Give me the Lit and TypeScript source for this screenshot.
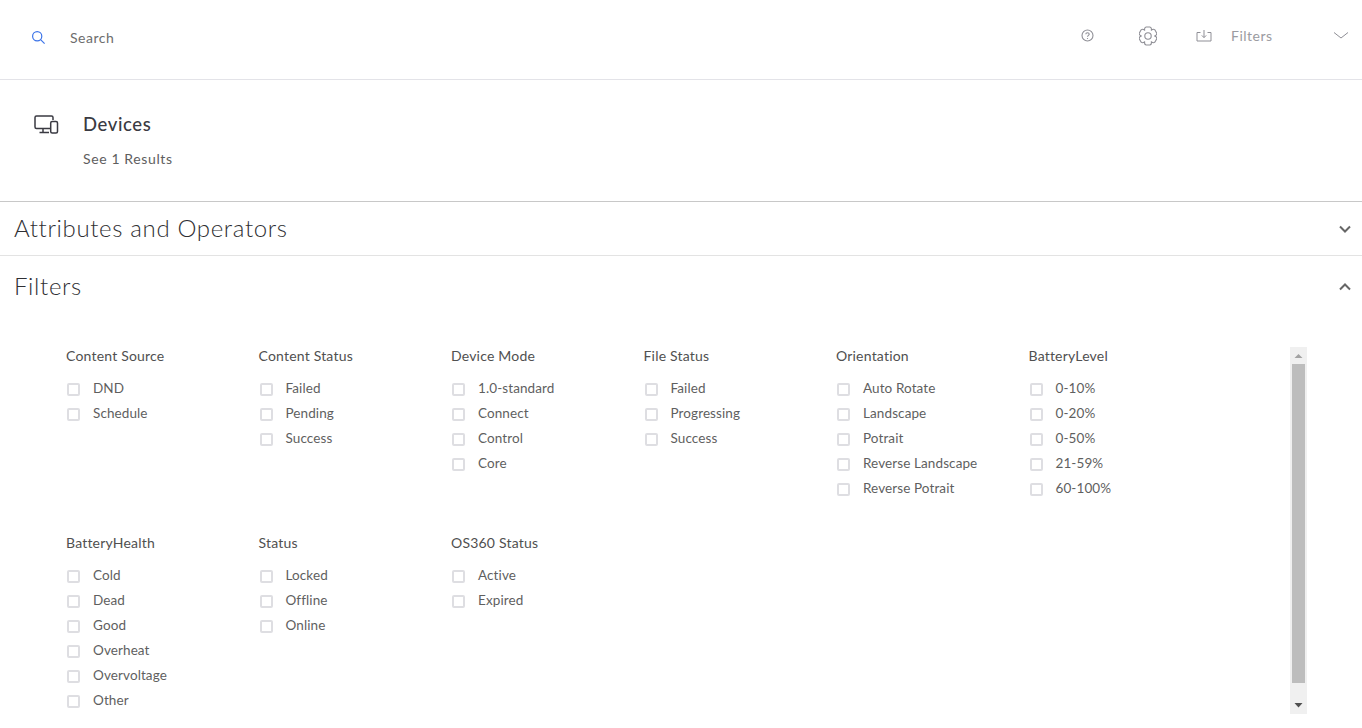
import { LitElement, html, css, svg } from "lit";
import { customElement } from "lit/decorators.js";

const groups: [string, string[]][] = [
  ["Content Source", ["DND", "Schedule"]],
  ["Content Status", ["Failed", "Pending", "Success"]],
  ["Device Mode", ["1.0-standard", "Connect", "Control", "Core"]],
  ["File Status", ["Failed", "Progressing", "Success"]],
  ["Orientation", ["Auto Rotate", "Landscape", "Potrait", "Reverse Landscape", "Reverse Potrait"]],
  ["BatteryLevel", ["0-10%", "0-20%", "0-50%", "21-59%", "60-100%"]],
  ["BatteryHealth", ["Cold", "Dead", "Good", "Overheat", "Overvoltage", "Other"]],
  ["Status", ["Locked", "Offline", "Online"]],
  ["OS360 Status", ["Active", "Expired"]],
];

const pt = (r: number, deg: number) => {
  const a = (deg * Math.PI) / 180;
  return `${(9 + r * Math.cos(a)).toFixed(2)} ${(9.5 + r * Math.sin(a)).toFixed(2)}`;
};
const gearPath = (() => {
  let d = `M${pt(6.6, -120)}`;
  for (let i = 0; i < 6; i++) {
    const c = -90 + 60 * i;
    d += ` C${pt(8.6, c - 26)} ${pt(9.2, c - 22)} ${pt(9.2, c - 12)} L${pt(9.2, c + 12)} C${pt(9.2, c + 22)} ${pt(8.6, c + 26)} ${pt(6.6, c + 30)}`;
  }
  return d + " Z";
})();

const chevron = (up: boolean) => html`<svg class="chev" width="14" height="10" viewBox="0 0 14 10" fill="none" stroke="#666" stroke-width="2">
  ${up ? svg`<path d="M2 7.5 L7 2.5 L12 7.5"/>` : svg`<path d="M2 2.5 L7 7.5 L12 2.5"/>`}
</svg>`;

@customElement("app-root")
export class AppRoot extends LitElement {
  static styles = css`
    :host { display: block; height: 728px; overflow: hidden; background: #fff; font-family: Lato, sans-serif; color: #4a4a4a; }
    .top { height: 79px; border-bottom: 1px solid #e3e3e8; display: flex; align-items: center; box-sizing: content-box; }
    .search-ico { margin-left: 31px; margin-top: -4px; flex: none; }
    .search-text { margin-left: 24px; font-size: 14px; color: #6d6d6d; letter-spacing: .5px; margin-top: -5px; flex: 1; }
    .tools { display: flex; align-items: center; margin-top: -8px; color: #9a9aa0; }
    .tools .help { margin-right: 45px; }
    .tools .gear { margin-right: 39px; }
    .tools .dl { margin-right: 19px; }
    .tools .flt { font-size: 14px; letter-spacing: .5px; color: #9b9ba1; margin-right: 60px; width: 42px; }
    .tools .down { margin-right: 13px; }
    .devices { height: 121px; border-bottom: 1px solid #c8c8c8; display: flex; }
    .dev-ico { margin: 35px 0 0 34px; flex: none; }
    .dev-text { margin-left: 24px; padding-top: 32px; }
    .dev-title { font-size: 18.5px; font-weight: 500; color: #3a3a42; line-height: 24px; letter-spacing: .6px; }
    .dev-sub { font-size: 14px; color: #5e5e5e; margin-top: 14px; line-height: 18px; letter-spacing: .62px; }
    .acc { display: flex; align-items: center; justify-content: space-between; padding: 0 10px 0 14px; font-size: 24px; color: #2f2f33; letter-spacing: .65px; }
    .acc span { margin-top: -2px; font-weight: 300; }
    .acc.a { height: 53px; border-bottom: 1px solid #e3e3e3; }
    .acc.b { height: 61px; }
    .body { display: flex; padding: 30px 55px 0 66px; }
    .grid { flex: 1; display: grid; grid-template-columns: repeat(6, 192.5px); grid-auto-rows: 187px; align-content: start; }
    .h { font-size: 14px; line-height: 18px; color: #505050; letter-spacing: .2px; margin-bottom: 10px; }
    .it { display: flex; align-items: center; height: 25px; font-size: 13.5px; color: #5f5f5f; letter-spacing: .1px; }
    .box { width: 9px; height: 9px; border: 2px solid #dedee2; border-radius: 2px; margin: 4px 13px 0 1px; flex: none; background: #fff; }
    .sb { width: 17px; height: 367px; flex: none; background: #f0f0f0; display: flex; flex-direction: column; align-items: center; }
    .sb .btn { height: 17px; display: flex; align-items: center; justify-content: center; }
    .sb .thumb { width: 13px; flex: 1; background: #bdbdbd; margin-bottom: 14px; }
  `;

  render() {
    return html`
      <div class="top">
        <svg class="search-ico" width="15" height="15" viewBox="0 0 15 15" fill="none" stroke="#3b73e8" stroke-width="1.2">
          <circle cx="6.2" cy="6.2" r="4.6"/><path d="M9.6 9.6 L13.6 13.6"/>
        </svg>
        <span class="search-text">Search</span>
        <div class="tools">
          <svg class="help" width="13" height="13" viewBox="0 0 13 13" fill="none" stroke="#8f8f96" stroke-width="1.1">
            <circle cx="6.5" cy="6.5" r="5.5"/><path d="M4.8 5.2 C4.8 3.2 8.2 3.2 8.2 5.2 C8.2 6.4 6.5 6.4 6.5 7.8"/><path d="M6.5 9 V9.9"/>
          </svg>
          <svg class="gear" width="18" height="20" viewBox="0 0 18 19" fill="none" stroke="#8f8f96" stroke-width="1.1">
            <path d="${gearPath}" stroke-linejoin="round"/>
            <circle cx="9" cy="9.5" r="3.2"/>
          </svg>
          <svg class="dl" width="16" height="13" viewBox="0 0 16 13" fill="none" stroke="#8f8f96" stroke-width="1">
            <path d="M4.5 3.5 H1 V12 H15 V3.5 H11.5"/><path d="M8 1 V8.5 M5.8 6.4 L8 8.6 L10.2 6.4"/>
          </svg>
          <span class="flt">Filters</span>
          <svg class="down" width="16" height="9" viewBox="0 0 16 9" fill="none" stroke="#8f8f96" stroke-width="1"><path d="M1 1.5 L8 7 L15 1.5"/></svg>
        </div>
      </div>
      <div class="devices">
        <svg class="dev-ico" width="25" height="20" viewBox="0 0 25 20" fill="none" stroke="#3a3a42" stroke-width="1.5">
          <path d="M16 13.5 H2.5 Q1 13.5 1 12 V2.5 Q1 1 2.5 1 H17.5 Q19 1 19 2.5 V5"/>
          <path d="M9 14 V17.5 M5.5 17.5 H15"/>
          <rect x="16.7" y="6.5" width="6.8" height="11.5" rx="1.5"/>
        </svg>
        <div class="dev-text">
          <div class="dev-title">Devices</div>
          <div class="dev-sub">See 1 Results</div>
        </div>
      </div>
      <div class="acc a"><span>Attributes and Operators</span>${chevron(false)}</div>
      <div class="acc b"><span>Filters</span>${chevron(true)}</div>
      <div class="body">
        <div class="grid">
          ${groups.map(([t, items]) => html`<div>
            <div class="h">${t}</div>
            ${items.map((i) => html`<div class="it"><span class="box"></span>${i}</div>`)}
          </div>`)}
        </div>
        <div class="sb">
          <div class="btn"><svg width="9" height="5" viewBox="0 0 9 5"><path d="M0.5 5 L4.5 1 L8.5 5 Z" fill="#a3a3a3"/></svg></div>
          <div class="thumb"></div>
          <div class="btn"><svg width="9" height="5" viewBox="0 0 9 5"><path d="M0.5 0 L4.5 4.5 L8.5 0 Z" fill="#505050"/></svg></div>
        </div>
      </div>
    `;
  }
}
